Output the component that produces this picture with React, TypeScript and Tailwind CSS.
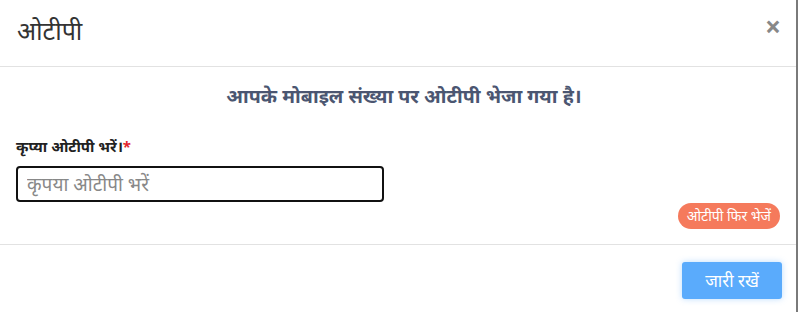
export default function App() {
  return (
    <div className="h-[312px] w-[800px] overflow-hidden bg-white" style={{ fontFamily: '"Noto Sans", "Liberation Sans", sans-serif' }}>
      <div className="flex h-full w-[798px] flex-col border-r-2 border-[#7a7a7a]">
        <div className="flex h-[67px] items-center justify-between border-b border-[#e2e2e2] pl-[17px] pr-[15px]">
          <h4 className="mt-[-6px] text-[25px] font-normal leading-none text-[#333]">ओटीपी</h4>
          <button className="mt-[-14px] text-[28px] font-bold leading-none text-[#888]">×</button>
        </div>
        <div className="flex h-[178px] flex-col border-b border-[#e2e2e2] px-[16px]">
          <p className="mt-[14px] pl-[12px] text-center text-[19.6px] font-bold leading-[30px] text-[#4b5671]">
            आपके मोबाइल संख्या पर ओटीपी भेजा गया है।
          </p>
          <label className="mt-[25px] text-[15px] font-bold leading-[20px] text-[#222]">
            कृप्या ओटीपी भरें।<span className="text-[#e3262f]">*</span>
          </label>
          <input
            type="text"
            placeholder="कृपया ओटीपी भरें"
            className="mt-[10px] h-[36px] w-[368px] rounded-[4px] border-2 border-[#111] px-[9px] text-[19px] text-[#333] outline-none placeholder:text-[#888]"
          />
          <div className="flex justify-end">
            <button className="mt-[1px] h-[26px] rounded-full bg-[#f57a5c] px-[9px] text-[14px] leading-none text-white">
              ओटीपी फिर भेजें
            </button>
          </div>
        </div>
        <div className="flex justify-end pr-[14px] pt-[17px]">
          <button className="h-[37px] w-[100px] rounded-[3px] bg-[#5aabfc] text-[17px] text-white shadow-[0_0_6px_rgba(90,171,252,0.4)]">
            जारी रखें
          </button>
        </div>
      </div>
    </div>
  )
}
